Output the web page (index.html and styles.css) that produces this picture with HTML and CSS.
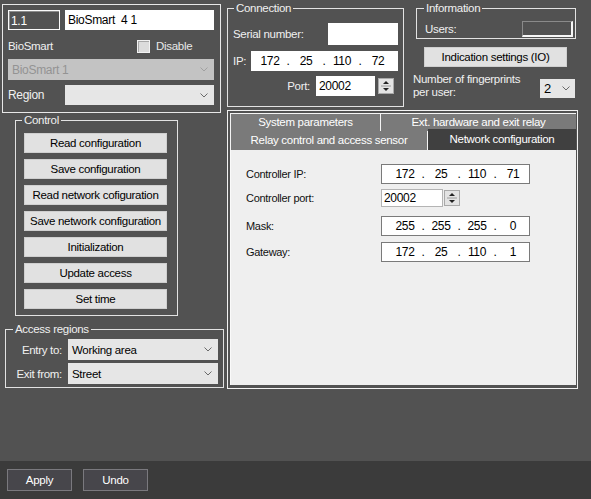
FILE: index.html
```html
<!DOCTYPE html>
<html lang="en">
<head>
  <meta charset="UTF-8">
  <title>BioSmart 4 1</title>
  <link rel="stylesheet" href="styles.css">
</head>
<body>
<div class="window">
  <div class="content">

    <!-- Left column -->
    <div class="left-col">
      <div class="device-box">
        <div class="row row-name">
          <div class="dark-field">1.1</div>
          <div class="name-field">BioSmart&nbsp; 4 1</div>
        </div>
        <div class="row row-type">
          <span class="type-label">BioSmart</span>
          <span class="check"><span class="check-box"></span>Disable</span>
        </div>
        <div class="select select-disabled">
          <span>BioSmart 1</span>
          <svg class="chevron" viewBox="0 0 8 5"><polyline points="0.5,0.5 4,4 7.5,0.5"/></svg>
        </div>
        <div class="row row-region">
          <span class="region-label">Region</span>
          <div class="select region-select">
            <span></span>
            <svg class="chevron" viewBox="0 0 8 5"><polyline points="0.5,0.5 4,4 7.5,0.5"/></svg>
          </div>
        </div>
      </div>

      <fieldset class="group control-group">
        <legend>Control</legend>
        <button class="btn">Read configuration</button>
        <button class="btn">Save configuration</button>
        <button class="btn">Read network cofiguration</button>
        <button class="btn">Save network configuration</button>
        <button class="btn">Initialization</button>
        <button class="btn">Update access</button>
        <button class="btn">Set time</button>
      </fieldset>

      <fieldset class="group access-group">
        <legend>Access regions</legend>
        <div class="access-grid">
          <span class="access-label">Entry to:</span>
          <div class="select">
            <span>Working area</span>
            <svg class="chevron" viewBox="0 0 8 5"><polyline points="0.5,0.5 4,4 7.5,0.5"/></svg>
          </div>
          <span class="access-label">Exit from:</span>
          <div class="select">
            <span>Street</span>
            <svg class="chevron" viewBox="0 0 8 5"><polyline points="0.5,0.5 4,4 7.5,0.5"/></svg>
          </div>
        </div>
      </fieldset>
    </div>

    <!-- Right column -->
    <div class="right-col">
      <div class="top-row">
        <fieldset class="group connection-group">
          <legend>Connection</legend>
          <div class="conn-row serial-row">
            <span>Serial number:</span>
            <div class="white-field serial-field"></div>
          </div>
          <div class="conn-row ip-row">
            <span>IP:</span>
            <div class="white-field ip-field conn-ip">
              <span class="oct">172</span><span class="dot">.</span>
              <span class="oct">25</span><span class="dot">.</span>
              <span class="oct">110</span><span class="dot">.</span>
              <span class="oct">72</span>
            </div>
          </div>
          <div class="conn-row port-row">
            <span>Port:</span>
            <div class="white-field port-field">20002</div>
            <div class="spin">
              <svg viewBox="0 0 14 14"><polygon points="4,5 10,5 7,2"/><line x1="2" y1="7" x2="12" y2="7"/><polygon points="4,9 10,9 7,12"/></svg>
            </div>
          </div>
        </fieldset>

        <div class="info-col">
          <fieldset class="group info-group">
            <legend>Information</legend>
            <div class="users-row">
              <span>Users:</span>
              <div class="users-field"></div>
            </div>
          </fieldset>
          <button class="btn indication-btn">Indication settings (IO)</button>
          <div class="finger-row">
            <span class="finger-label">Number of fingerprints<br>per user:</span>
            <div class="select finger-select">
              <span class="finger-value">2</span>
              <svg class="chevron" viewBox="0 0 8 5"><polyline points="0.5,0.5 4,4 7.5,0.5"/></svg>
            </div>
          </div>
        </div>
      </div>

      <div class="tab-frame">
        <div class="tab-row tab-row-back">
          <div class="tab tab-sys">System parameters</div>
          <div class="tab tab-ext">Ext. hardware and exit relay</div>
        </div>
        <div class="tab-row tab-row-front">
          <div class="tab tab-relay">Relay control and access sensor</div>
          <div class="tab tab-active">Network configuration</div>
        </div>
        <div class="tab-panel">
          <div class="net-row">
            <span class="net-label">Controller IP:</span>
            <div class="net-field ip-field">
              <span class="oct">172</span><span class="dot">.</span>
              <span class="oct">25</span><span class="dot">.</span>
              <span class="oct">110</span><span class="dot">.</span>
              <span class="oct">71</span>
            </div>
          </div>
          <div class="net-row net-port-row">
            <span class="net-label">Controller port:</span>
            <div class="net-field net-port">20002</div>
            <div class="spin net-spin">
              <svg viewBox="0 0 14 14"><polygon points="4,5 10,5 7,2"/><line x1="2" y1="7" x2="12" y2="7"/><polygon points="4,9 10,9 7,12"/></svg>
            </div>
          </div>
          <div class="net-row net-mask-row">
            <span class="net-label">Mask:</span>
            <div class="net-field ip-field">
              <span class="oct">255</span><span class="dot">.</span>
              <span class="oct">255</span><span class="dot">.</span>
              <span class="oct">255</span><span class="dot">.</span>
              <span class="oct">0</span>
            </div>
          </div>
          <div class="net-row net-gw-row">
            <span class="net-label">Gateway:</span>
            <div class="net-field ip-field">
              <span class="oct">172</span><span class="dot">.</span>
              <span class="oct">25</span><span class="dot">.</span>
              <span class="oct">110</span><span class="dot">.</span>
              <span class="oct">1</span>
            </div>
          </div>
        </div>
      </div>
    </div>
  </div>

  <!-- Bottom bar -->
  <div class="footer">
    <button class="footer-btn">Apply</button>
    <button class="footer-btn">Undo</button>
  </div>
</div>
</body>
</html>
```

FILE: styles.css
```css
body {
  margin: 0;
  background: #525252;
  font-family: "Liberation Sans", Arial, sans-serif;
  font-size: 11.5px;
  letter-spacing: -0.3px;
  color: #f0f0f0;
}

.window {
  width: 591px;
  height: 499px;
  display: flex;
  flex-direction: column;
}

.content {
  flex: 1;
  display: flex;
}

/* generic controls */
.btn {
  display: block;
  box-sizing: border-box;
  width: 143px;
  height: 20px;
  padding: 0;
  background: #e1e1e1;
  border: 1px solid #cfcfcf;
  color: #000;
  font: inherit;
  letter-spacing: inherit;
}

.select {
  box-sizing: border-box;
  display: flex;
  align-items: center;
  justify-content: space-between;
  padding: 0 6px 0 4px;
  background: #e6e6e6;
  color: #000;
}

.chevron {
  width: 8px;
  height: 5px;
  fill: none;
  stroke: #6a6a6a;
  stroke-width: 1;
}

.group {
  margin: 0;
  padding: 0;
  border: 1px solid #e2e2e2;
  box-sizing: border-box;
  min-width: 0;
}

.group legend {
  padding: 0 2px;
  line-height: 12px;
  color: #f0f0f0;
}

.spin {
  box-sizing: border-box;
  width: 16px;
  height: 16px;
  background: #e3e3e3;
  border: 1px solid #a9a9a9;
}

.spin svg {
  display: block;
  width: 14px;
  height: 14px;
  fill: #222;
  stroke: none;
}

.spin svg line {
  stroke: #9a9a9a;
  stroke-width: 1;
}

/* left column */
.left-col {
  width: 222px;
  margin-left: 2px;
  padding-top: 4px;
  display: flex;
  flex-direction: column;
}

.device-box {
  box-sizing: border-box;
  width: 219px;
  height: 109px;
  border: 1px solid #e8e8e8;
  padding: 5px 6px 0 5px;
}

.row {
  display: flex;
  align-items: center;
}

.row-name {
  height: 20px;
  gap: 5px;
}

.dark-field {
  box-sizing: border-box;
  width: 52px;
  height: 20px;
  padding: 3px 0 0 2px;
  border: 1px solid #fafafa;
  box-shadow: inset 1px 1px 0 #8c8c8c;
  color: #fff;
  font-size: 12px;
}

.name-field {
  box-sizing: border-box;
  width: 149px;
  height: 20px;
  padding: 3px 0 0 3px;
  background: #fff;
  color: #000;
  font-size: 12px;
}

.row-type {
  height: 20px;
  margin-top: 6px;
}

.type-label {
  width: 129px;
}

.check {
  display: flex;
  align-items: center;
  gap: 6px;
  color: #e8e8e8;
}

.check-box {
  box-sizing: border-box;
  width: 13px;
  height: 13px;
  background: #dcdcdc;
  border: 1px solid #f2f2f2;
  box-shadow: inset 1px 1px 0 #a8a8a8;
}

.select-disabled {
  height: 21px;
  margin-top: 3px;
  background: #c3c3c3;
  color: #939393;
  font-size: 12px;
}

.select-disabled .chevron {
  stroke: #a0a0a0;
}

.row-region {
  height: 20px;
  margin-top: 5px;
}

.region-label {
  width: 57px;
  font-size: 12px;
}

.region-select {
  width: 149px;
  height: 20px;
}

.control-group {
  width: 163px;
  margin: 1px 0 0 13px;
  padding: 0 9px 6px 8px;
}

.control-group legend {
  margin-left: -2px;
}

.control-group .btn {
  margin-top: 6px;
}

.control-group .btn:first-of-type {
  margin-top: 7px;
}

.access-group {
  width: 219px;
  margin: 7px 0 0 3px;
  padding: 0 5px 3px 0;
}

.access-group legend {
  margin-left: 7px;
}

.access-grid {
  display: grid;
  grid-template-columns: 56px 150px;
  grid-auto-rows: 21px;
  column-gap: 6px;
  row-gap: 3px;
  margin-top: 4px;
  align-items: center;
}

.access-label {
  text-align: right;
}

.access-grid .select {
  height: 21px;
  padding-left: 4px;
}

/* right column */
.right-col {
  width: 351px;
  margin-left: 3px;
  display: flex;
  flex-direction: column;
}

.top-row {
  height: 108px;
  display: flex;
  align-items: flex-start;
}

.connection-group {
  width: 177px;
  height: 105px;
  margin-top: 2px;
  padding: 0 5px;
}

.connection-group legend {
  margin-left: 1px;
}

.conn-row {
  display: flex;
  align-items: center;
  justify-content: space-between;
  height: 20px;
}

.serial-row {
  height: 22px;
  margin-top: 9px;
}

.white-field {
  box-sizing: border-box;
  height: 20px;
  background: #fff;
  color: #000;
}

.serial-field {
  width: 70px;
  height: 22px;
}

.ip-row {
  margin-top: 6px;
}

.ip-field {
  display: flex;
  align-items: center;
}

.ip-field .oct {
  width: 30px;
  text-align: center;
}

.ip-field .dot {
  width: 6px;
  text-align: center;
}

.conn-ip {
  width: 147px;
  padding-left: 4px;
  font-size: 12px;
}

.port-row {
  margin-top: 5px;
  justify-content: flex-end;
  padding-right: 4px;
}

.port-field {
  width: 59px;
  margin-left: 6px;
  margin-right: 3px;
  padding: 3px 0 0 3px;
  font-size: 12px;
}

.info-col {
  width: 165px;
  margin-left: 9px;
}

.info-group {
  width: 160px;
  height: 37px;
  margin: 2px 0 0 3px;
  padding: 0 2px 0 8px;
}

.info-group legend {
  margin-left: -1px;
}

.users-row {
  display: flex;
  align-items: center;
  justify-content: space-between;
  height: 16px;
  margin-top: 7px;
}

.users-field {
  box-sizing: border-box;
  width: 51px;
  height: 16px;
  border-style: solid;
  border-width: 1px 2px 2px 1px;
  border-color: #8a8a8a #f6f6f6 #f6f6f6 #8a8a8a;
}

.indication-btn {
  margin: 8px 0 0 11px;
}

.finger-row {
  display: flex;
  margin-top: 6px;
}

.finger-label {
  width: 127px;
  line-height: 13px;
}

.finger-select {
  width: 35px;
  height: 19px;
  margin-top: 6px;
  padding: 0 5px 0 4px;
  font-size: 13px;
}

/* tabs */
.tab-frame {
  box-sizing: border-box;
  width: 351px;
  height: 279px;
  margin-top: 2px;
  border: 1px solid #f2f2f2;
  padding: 2px 1px 2px 2px;
}

.tab-row {
  display: flex;
}

.tab {
  box-sizing: border-box;
  background: #7a7a7a;
  color: #fff;
  text-align: center;
}

.tab-row-back .tab {
  height: 18px;
  line-height: 17px;
  border-top: 1px solid #f4f4f4;
}

.tab-sys {
  width: 151px;
  border-left: 1px solid #f4f4f4;
  border-right: 1px solid #f4f4f4;
}

.tab-ext {
  flex: 1;
}

.tab-row-front .tab {
  height: 19px;
  line-height: 19px;
}

.tab-relay {
  width: 198px;
  border-left: 1px solid #f4f4f4;
  border-right: 1px solid #f4f4f4;
}

.tab-active {
  flex: 1;
  height: 21px !important;
  margin-top: -2px;
  line-height: 20px !important;
  background: #404040;
}

.tab-panel {
  box-sizing: border-box;
  height: 235px;
  padding: 14px 0 0 15px;
  background: #efefef;
  border-left: 1px solid #fafafa;
  color: #111;
  font-size: 11px;
}

.net-row {
  display: flex;
  align-items: center;
  height: 20px;
}

.net-label {
  width: 135px;
}

.net-field {
  box-sizing: border-box;
  width: 149px;
  height: 20px;
  background: #fff;
  border: 1px solid #7a7a7a;
  color: #000;
  font-size: 12px;
}

.tab-panel .ip-field {
  padding-left: 8px;
}

.net-port-row {
  height: 18px;
  margin-top: 5px;
}

.net-port {
  width: 62px;
  height: 18px;
  padding: 1px 0 0 2px;
  border-color: #b4b4b4;
}

.net-spin {
  margin-left: 1px;
}

.net-mask-row {
  margin-top: 9px;
}

.net-gw-row {
  margin-top: 6px;
}

/* footer */
.footer {
  height: 38px;
  box-sizing: border-box;
  display: flex;
  gap: 11px;
  padding: 8px 0 0 7px;
  background: #3b3b3b;
}

.footer-btn {
  width: 65px;
  height: 22px;
  padding: 0;
  background: #47464b;
  border: 1px solid #7a797e;
  color: #fff;
  font: inherit;
  letter-spacing: inherit;
}
```
